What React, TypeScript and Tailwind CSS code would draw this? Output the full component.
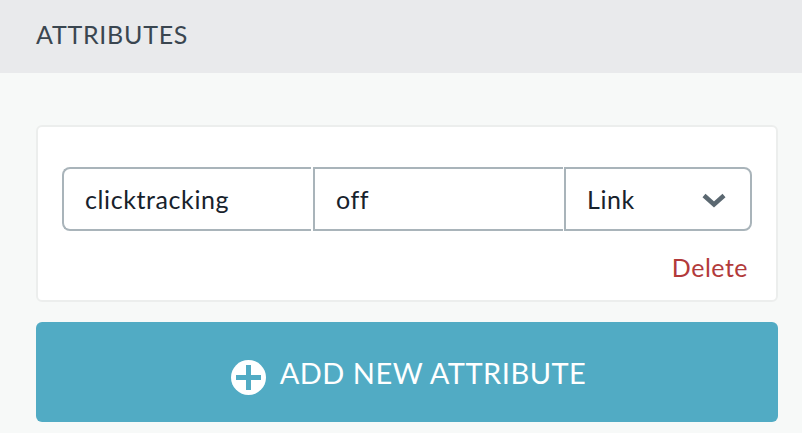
export default function App() {
  return (
    <div className="w-[802px] h-[433px] overflow-hidden bg-[#f7f9f8] flex flex-col font-['Lato',sans-serif]">
      <div className="h-[73px] shrink-0 bg-[#e9eaec] pl-[36px] flex items-center pb-[5px]">
        <span className="text-[25px] leading-[30px] tracking-[0.75px] text-[#3a4650]">ATTRIBUTES</span>
      </div>
      <div className="pl-[36px] pr-[24px] pt-[52px] flex flex-col">
        <div className="h-[177px] bg-white border-2 border-[#eceeed] rounded-[6px] pt-[40px] pl-[24px] flex flex-col">
          <div className="flex h-[64px] w-[690px] text-[25px] tracking-[0.6px] text-[#17222c]">
            <div className="w-[249px] border-2 border-r-0 border-[#a9b4ba] rounded-l-[8px] pl-[21px] pt-[2px] flex items-center">clicktracking</div>
            <div className="w-[250px] ml-[2px] border-2 border-r-0 border-[#a9b4ba] pl-[21px] pt-[2px] flex items-center">off</div>
            <div className="w-[188px] ml-[1px] border-2 border-[#a9b4ba] rounded-r-[8px] pl-[21px] pr-[24px] flex items-center justify-between">
              <span className="pt-[2px]">Link</span>
              <svg width="24" height="15" viewBox="0 0 24 15" fill="none" className="mt-[2px]">
                <path d="M2 2.5L12 11.5L22 2.5" stroke="#5b6871" strokeWidth="4.5" />
              </svg>
            </div>
          </div>
          <div className="w-[686px] text-right text-[25px] tracking-[0.5px] leading-[30px] mt-[21px] text-[#b23a3a]">Delete</div>
        </div>
        <div className="mt-[20px] h-[100px] bg-[#51abc4] rounded-[6px] flex items-center justify-center gap-[14px] pl-[3px]">
          <svg width="35" height="35" viewBox="0 0 35 35" className="mt-[10px]">
            <circle cx="17.5" cy="17.5" r="17.5" fill="#fff" />
            <path d="M17.5 5V30M5 17.5H30" stroke="#51abc4" strokeWidth="5" />
          </svg>
          <span className="text-[29px] leading-[36px] tracking-[0.5px] text-white pt-[2px]">ADD NEW ATTRIBUTE</span>
        </div>
      </div>
    </div>
  );
}
